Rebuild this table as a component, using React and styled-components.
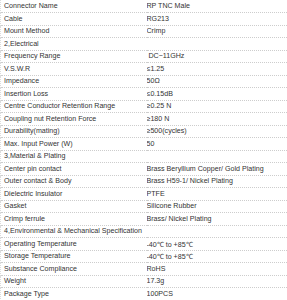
import React from 'react';
import styled, { createGlobalStyle } from 'styled-components';

const Global = createGlobalStyle`
  html, body {
    margin: 0;
    padding: 0;
    background: #fff;
  }
`;

const SpecTable = styled.table`
  width: 287px;
  border-collapse: collapse;
  table-layout: fixed;
  font-family: 'Liberation Sans', Arial, sans-serif;
  font-size: 7.1px;
  color: #333;
`;

const Row = styled.tr`
  height: 12.5px;
  border-bottom: 1px dotted #cdcdcd;
`;

const Cell = styled.td`
  padding: 0 0 0 ${(p) => (p.$value ? '0' : '3px')};
  white-space: nowrap;
  overflow: hidden;
  vertical-align: middle;
  border-left: ${(p) => (p.$value ? 'none' : '1px dotted #dcdcdc')};
`;

const specs = [
  ['Connector Name', 'RP TNC Male'],
  ['Cable', 'RG213'],
  ['Mount Method', 'Crimp'],
  ['2,Electrical'],
  ['Frequency Range', '\u00a0DC~11GHz'],
  ['V.S.W.R', '≤1.25'],
  ['Impedance', '50Ω'],
  ['Insertion Loss', '≤0.15dB'],
  ['Centre Conductor Retention Range', '≥0.25 N'],
  ['Coupling nut Retention Force', '≥180 N'],
  ['Durability(mating)', '≥500(cycles)'],
  ['Max. Input Power (W)', '50'],
  ['3,Material & Plating'],
  ['Center pin contact', 'Brass Beryllium Copper/ Gold Plating'],
  ['Outer contact & Body', 'Brass H59-1/ Nickel Plating'],
  ['Dielectric Insulator', 'PTFE'],
  ['Gasket', 'Silicone Rubber'],
  ['Crimp ferrule', 'Brass/ Nickel Plating'],
  ['4,Environmental & Mechanical Specification'],
  ['Operating Temperature', '-40℃ to +85℃'],
  ['Storage Temperature', '-40℃ to +85℃'],
  ['Substance Compliance', 'RoHS'],
  ['Weight', '17.3g'],
  ['Package Type', '100PCS'],
];

export default function App() {
  return (
    <>
      <Global />
      <SpecTable>
        <colgroup>
          <col style={{ width: '146px' }} />
          <col />
        </colgroup>
        <tbody>
          {specs.map(([name, value]) => (
            <Row key={name}>
              {value === undefined ? (
                <Cell colSpan={2}>{name}</Cell>
              ) : (
                <>
                  <Cell>{name}</Cell>
                  <Cell $value>{value}</Cell>
                </>
              )}
            </Row>
          ))}
        </tbody>
      </SpecTable>
    </>
  );
}
